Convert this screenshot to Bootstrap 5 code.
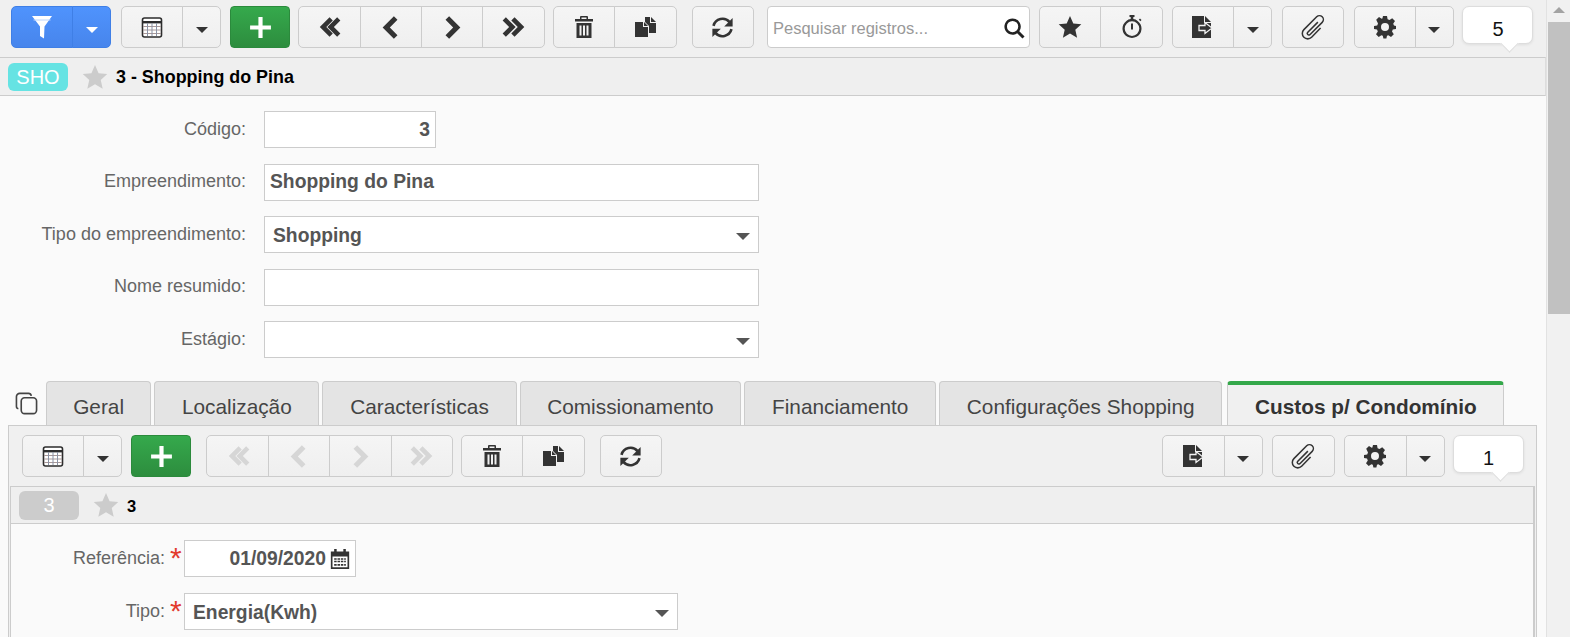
<!DOCTYPE html>
<html lang="pt">
<head>
<meta charset="utf-8">
<title>Shopping do Pina</title>
<link href="https://cdn.jsdelivr.net/npm/bootstrap@5.3.0/dist/css/bootstrap.min.css" rel="stylesheet">
<style>
html,body{height:637px;overflow:hidden}
body{font-family:"Liberation Sans",Arial,sans-serif;background:#fafafa;color:#555}
.page-wrap{height:637px}
.main-col{width:1546px;flex:none;overflow:hidden}
.scroll-col{width:24px;flex:none;background:#f1f1f1;border-left:1px solid #e2e2e2}
.scroll-up{height:22px;padding-top:7px}
.scroll-up i{display:block;width:0;height:0;margin:0 auto;border:6px solid transparent;border-top:0;border-bottom:6px solid #a3a3a3}
.scroll-thumb{height:292px;background:#c1c1c1;margin-left:1px}
.top-bar{height:57px;background:#f0f0f0;padding:6px 0 0 11px}
.sub-bar{height:60px;padding:9px 12px 0 13px}
.btn.tb{height:42px;width:62.4px;padding:0;display:flex;align-items:center;justify-content:center;background:linear-gradient(#f5f5f5,#efefef);border:1px solid #ccc;border-radius:5px;color:#333}
.btn.tb:hover{background:#eee;border-color:#ccc}
.btn.tb-c{width:39px}
.btn.tb-blue{background:linear-gradient(#4f93fd,#4785ec);border-color:#3f7fe6;color:#fff}
.btn.tb-blue:hover{background:#4785ec;border-color:#3f7fe6}
.btn.tb-green{width:60px;background:linear-gradient(#35a94c,#2d8d3e);border-color:#2b8a3c;color:#fff;border-radius:4px}
.btn.tb-green:hover{background:#2d8d3e;border-color:#2b8a3c}
.btn.tb-off{color:#d6d6d6}
.caret-dn{width:0;height:0;border:6px solid transparent;border-bottom:0;border-top:6px solid currentColor;margin-top:6px}
.caret-big{border-width:7px;border-bottom:0;border-top-width:7px;color:#555;margin:3px 3px 0 0}
.ic{display:block;fill:currentColor}
.g05{margin-left:.5px}
.g1{margin-left:1px}
.g15{margin-left:1.5px}
.g7{margin-left:7px}
.g5{margin-left:5px}
.search-box{width:263px;height:42px;background:#fff;border:1px solid #ccc;border-radius:4px;padding:2px 3px 0 5px;font-size:16.5px;color:#999}
.search-box svg{color:#222}
.count-tip{width:71px;height:38px;background:#fff;border:1px solid #ddd;border-radius:7px;text-align:center;font-size:20px;line-height:44px;color:#111;position:relative;box-shadow:0 1px 3px rgba(0,0,0,.08)}
.count-tip::after{content:"";position:absolute;right:16px;bottom:-7px;width:13px;height:13px;background:#fff;transform:rotate(45deg);border:1px solid #ddd;border-width:0 1px 1px 0}
.rec-head{height:39px;background:#efefef;border-top:1px solid #ccc;border-bottom:1px solid #ccc;border-right:1px solid #ddd;padding-left:8px}
.tag-sho{width:60px;height:28px;background:#66e3e3;border-radius:6px;color:#fff;font-size:20px;line-height:28px;text-align:center}
.tag-three{width:60px;height:29px;background:#ccc;border-radius:6px;color:#fff;font-size:20px;line-height:29px;text-align:center}
.star-ic{color:#ccc;margin:0 8px 0 14px}
.rec-title{font-weight:700;font-size:17.9px;color:#000;padding-top:1px}
.rec-title-s{font-weight:700;font-size:16.5px;color:#000;padding-top:3px}
.form-area{padding-top:15px;height:285px}
.frow{height:37px;margin-bottom:15.5px}
.flabel{width:246px;margin-right:18px;text-align:right;font-size:18px;color:#666;padding-bottom:1px}
.fbox.form-control{height:100%;border:1px solid #ccc;border-radius:0;background:#fff;padding:0 5px;font-weight:700;font-size:19.3px;color:#555;line-height:1.2;box-shadow:none}
.w-code{width:172px}
.w-long{width:495px}
.tab-strip{height:44px}
.tab-ic{width:38px;color:#444;padding:11px 0 0 15px}
.nav-tabs.tab-list{border:0;gap:3px;flex-wrap:nowrap;margin-left:8px}
.nav-tabs.tab-list .nav-link{height:44px;margin:0;padding:10px 26.7px 0;background:#e4e4e4;border:1px solid #ccc;border-bottom:0;border-radius:4px 4px 0 0;font-size:20.8px;line-height:30px;color:#444;white-space:nowrap}
.nav-tabs.tab-list .nav-item:first-child .nav-link{padding:10px 26.2px 0}
.nav-tabs.tab-list .nav-link.active{background:#f0f0f0;font-weight:700;color:#333;border-top:4px solid #34a84a;padding:7px 26.7px 0;margin-left:2px}
.sub-panel{margin:0 9px 0 8px;height:230px;background:#f0f0f0;border:1px solid #ccc;border-bottom:0}
.sub-inner{margin:0 1px 0 1px;border-left:1px solid #ccc;border-right:2px solid #ccc;background:#fafafa;height:170px}
.rec-head-s{height:38px;background:#efefef;border-top:1px solid #ccc;border-bottom:1px solid #ccc;padding-left:8px}
.sub-form{padding-top:16px}
.frow-s{height:37px;margin-bottom:16px}
.flabel-s{width:154px;text-align:right;font-size:18px;color:#666;padding-bottom:1px}
.req{width:19px;padding-left:5px;color:#e23b2e;font-size:30px;font-weight:400;line-height:30px;height:30px;margin-top:3px;flex:none}
.w-date{width:172px;justify-content:flex-end;padding-right:5px!important}
.w-date svg{color:#333}
.w-tipo{width:494px}
.sel-text{padding:2px 0 0 3px}
.push-right{margin-left:auto}
</style>
</head>
<body>
<svg width="0" height="0" class="position-absolute">
<defs>
<symbol id="i-funnel" viewBox="0 0 24 24"><path d="M2 1h20l-7.500 10.500L14 23.500l-4-2.500v-9.500z"/><path d="M3.500 5h17" stroke="#bcd4fb" stroke-width="1" fill="none"/></symbol>
<symbol id="i-table" viewBox="0 0 24 24"><rect x="2.500" y="3" width="19" height="19" rx="2" fill="#fff" stroke="#2d2d2d" stroke-width="1.600"/><path d="M2.500 7.200h19" stroke="#2d2d2d" stroke-width="2.400"/><path d="M3 11.500h18M3 15h18M3 18.500h18" stroke="#a99" stroke-width="1"/><path d="M7.500 8v13M12 8v13M16.500 8v13" stroke="#8a93a5" stroke-width="1"/></symbol>
<symbol id="i-plus" viewBox="0 0 24 24"><path d="M10 2h4v8h8v4h-8v8h-4v-8H2v-4h8z"/></symbol>
<symbol id="i-first" viewBox="0 0 24 24"><path d="M12.500 3l3 3-6 6 6 6-3 3-9-9z"/><path d="M20.500 3l3 3-6 6 6 6-3 3-9-9z" transform="translate(-1)"/></symbol>
<symbol id="i-prev" viewBox="0 0 24 24"><path d="M15 2l3.200 3.200L11.400 12l6.800 6.800L15 22 5 12z"/></symbol>
<symbol id="i-next" viewBox="0 0 24 24"><path d="M9 2L5.800 5.200 12.600 12l-6.800 6.800L9 22l10-10z"/></symbol>
<symbol id="i-last" viewBox="0 0 24 24"><path d="M3.500 3l-3 3 6 6-6 6 3 3 9-9z" transform="translate(1)"/><path d="M11.500 3l-3 3 6 6-6 6 3 3 9-9z" transform="translate(1)"/></symbol>
<symbol id="i-trash" viewBox="0 0 24 24"><path d="M9 1h6a1 1 0 0 1 1 1v2h5v2.500H3V4h5V2a1 1 0 0 1 1-1zm.500 1.500V4h5V2.500zM4.500 8h15v15h-15zm3 2.500v10h2v-10zm3.500 0v10h2v-10zm3.500 0v10h2v-10z" fill-rule="evenodd"/></symbol>
<symbol id="i-copy" viewBox="0 0 21 20"><path d="M0 5h8v5h5v10H0z"/><path d="M9 5l4 4h-4z"/><path d="M10 0h5v6h6v10h-7V9l-4-4z"/><path d="M16 0l5 5h-5z"/></symbol>
<symbol id="i-refresh" viewBox="0 0 24 24"><path d="M4 10.500A8.300 8.300 0 0 1 18.300 7.200" fill="none" stroke="currentColor" stroke-width="2.300"/><path d="M21 3.500V11h-7.500z"/><path d="M20 13.500A8.300 8.300 0 0 1 5.700 16.800" fill="none" stroke="currentColor" stroke-width="2.300"/><path d="M3 20.500V13h7.500z"/></symbol>
<symbol id="i-search" viewBox="0 0 24 24"><path d="M10 1.500a8.500 8.500 0 0 1 7 13.300l5.500 5.500-2.200 2.200-5.500-5.500A8.500 8.500 0 1 1 10 1.500zm0 2.600a5.900 5.900 0 1 0 0 11.800 5.900 5.900 0 0 0 0-11.800z" fill-rule="evenodd"/></symbol>
<symbol id="i-star" viewBox="0 0 24 24"><path d="M12 1l3.300 7.600 8 .7-6 5.400 1.800 8.100L12 18.600 4.900 22.800l1.800-8.100-6-5.400 8-.7z"/></symbol>
<symbol id="i-watch" viewBox="0 0 24 24"><path d="M9.500 0h5v2h-1.200v2.100a9.500 9.500 0 1 1-2.600 0V2H9.500zM12 6.300a7.300 7.300 0 1 0 0 14.600 7.300 7.300 0 0 0 0-14.600zM11 8.500h2v6h-2z" fill-rule="evenodd"/><path d="M20 3.500l1.500 1.500-1.200 1.200-1.500-1.500z"/></symbol>
<symbol id="i-export" viewBox="0 0 21 22"><path d="M0 0h12v7h7v15H0z"/><path d="M13 0l6 6h-6z"/><path d="M7 9.500h6V6.500l7 5.500-7 5.500v-3H7z" stroke="#f2f2f2" stroke-width="1.300"/></symbol>
<symbol id="i-clip" viewBox="0 0 24 24"><path d="M16.500 7.500L7 17a1.500 1.500 0 0 0 2.100 2.100L20.500 7.700a3.600 3.600 0 0 0-5.100-5.100L3.600 14.400a5 5 0 0 0 7.100 7.100L19 13" fill="none" stroke="currentColor" stroke-width="1.400"/></symbol>
<symbol id="i-gear" viewBox="0 0 24 24"><path d="M10 1h4l.6 3.200 1.900.8 2.700-1.800 2.800 2.800-1.800 2.700.8 1.900L23 11v3l-3.200.6-.8 1.900 1.800 2.700-2.800 2.800-2.700-1.800-1.300.5-.6 2.800h-3l-.6-2.800-1.400-.5-2.700 1.800L3 19.200l1.800-2.700-.8-1.900L1 14v-3l3.200-.6.800-1.900L3.200 4.800 6 2 8.700 3.800l.7-.3zM12 8a4 4 0 1 0 0 8 4 4 0 0 0 0-8z" fill-rule="evenodd"/></symbol>
<symbol id="i-cal" viewBox="0 0 24 24"><path d="M5 0h3v3h8V0h3v3h4v21H1V3h4zM3 9v13h18V9zm2 2h3v2H5zm4 0h3v2H9zm4 0h3v2h-3zm4 0h2v2h-2zM5 14h3v2H5zm4 0h3v2H9zm4 0h3v2h-3zm4 0h2v2h-2zM5 18h3v2H5zm4 0h3v2H9zm4 0h3v2h-3zm4 0h2v2h-2z" fill-rule="evenodd"/></symbol>
<symbol id="i-tabs" viewBox="0 0 24 24"><rect x="6.500" y="6" width="16" height="16.500" rx="3.500" fill="none" stroke="currentColor" stroke-width="1.700"/><path d="M3.500 17.500A2.500 2.500 0 0 1 1.500 15V5a3.500 3.500 0 0 1 3.500-3.500h9A3 3 0 0 1 17 4" fill="none" stroke="currentColor" stroke-width="1.700"/></symbol>
</defs>
</svg>

<div class="d-flex page-wrap">
<div class="main-col">

  <div class="top-bar d-flex align-items-start gap-2">
    <div class="btn-group">
      <button class="btn tb tb-blue"><svg class="ic" width="24" height="24"><use href="#i-funnel"/></svg></button>
      <button class="btn tb tb-c tb-blue"><span class="caret-dn"></span></button>
    </div>
    <div class="btn-group g15">
      <button class="btn tb"><svg class="ic" width="24" height="24"><use href="#i-table"/></svg></button>
      <button class="btn tb tb-c"><span class="caret-dn"></span></button>
    </div>
    <button class="btn tb tb-green g1"><svg class="ic" width="25" height="25"><use href="#i-plus"/></svg></button>
    <div class="btn-group">
      <button class="btn tb"><svg class="ic" width="26" height="26"><use href="#i-first"/></svg></button>
      <button class="btn tb"><svg class="ic" width="27" height="27"><use href="#i-prev"/></svg></button>
      <button class="btn tb"><svg class="ic" width="27" height="27"><use href="#i-next"/></svg></button>
      <button class="btn tb"><svg class="ic" width="26" height="26"><use href="#i-last"/></svg></button>
    </div>
    <div class="btn-group">
      <button class="btn tb"><svg class="ic" width="24" height="24"><use href="#i-trash"/></svg></button>
      <button class="btn tb"><svg class="ic" width="21" height="20"><use href="#i-copy"/></svg></button>
    </div>
    <button class="btn tb g7"><svg class="ic" width="27" height="27"><use href="#i-refresh"/></svg></button>
    <div class="search-box d-flex align-items-center justify-content-between g5">
      <span>Pesquisar registros...</span>
      <svg class="ic" width="23" height="23"><use href="#i-search"/></svg>
    </div>
    <div class="btn-group g1">
      <button class="btn tb"><svg class="ic" width="24" height="24"><use href="#i-star"/></svg></button>
      <button class="btn tb"><svg class="ic" width="24" height="24"><use href="#i-watch"/></svg></button>
    </div>
    <div class="btn-group g1">
      <button class="btn tb"><svg class="ic" width="21" height="22"><use href="#i-export"/></svg></button>
      <button class="btn tb tb-c"><span class="caret-dn"></span></button>
    </div>
    <button class="btn tb g15"><svg class="ic" width="26" height="26"><use href="#i-clip"/></svg></button>
    <div class="btn-group g15">
      <button class="btn tb"><svg class="ic" width="24" height="24"><use href="#i-gear"/></svg></button>
      <button class="btn tb tb-c"><span class="caret-dn"></span></button>
    </div>
    <div class="count-tip g05">5</div>
  </div>

  <div class="rec-head d-flex align-items-center">
    <span class="tag-sho">SHO</span>
    <svg class="ic star-ic" width="26" height="26"><use href="#i-star"/></svg>
    <span class="rec-title">3 - Shopping do Pina</span>
  </div>

  <div class="form-area">
    <div class="frow d-flex">
      <div class="flabel d-flex align-items-center justify-content-end">Código:</div>
      <div class="fbox form-control w-code d-flex align-items-center justify-content-end">3</div>
    </div>
    <div class="frow d-flex">
      <div class="flabel d-flex align-items-center justify-content-end">Empreendimento:</div>
      <div class="fbox form-control w-long d-flex align-items-center">Shopping do Pina</div>
    </div>
    <div class="frow d-flex">
      <div class="flabel d-flex align-items-center justify-content-end">Tipo do empreendimento:</div>
      <div class="fbox form-control w-long d-flex align-items-center justify-content-between"><span class="sel-text">Shopping</span><span class="caret-dn caret-big"></span></div>
    </div>
    <div class="frow d-flex">
      <div class="flabel d-flex align-items-center justify-content-end">Nome resumido:</div>
      <div class="fbox form-control w-long"></div>
    </div>
    <div class="frow d-flex">
      <div class="flabel d-flex align-items-center justify-content-end">Estágio:</div>
      <div class="fbox form-control w-long d-flex align-items-center justify-content-end"><span class="caret-dn caret-big"></span></div>
    </div>
  </div>

  <div class="tab-strip d-flex">
    <div class="tab-ic"><svg class="ic" width="23" height="23"><use href="#i-tabs"/></svg></div>
    <ul class="nav nav-tabs tab-list">
      <li class="nav-item"><a class="nav-link" href="#">Geral</a></li>
      <li class="nav-item"><a class="nav-link" href="#">Localização</a></li>
      <li class="nav-item"><a class="nav-link" href="#">Características</a></li>
      <li class="nav-item"><a class="nav-link" href="#">Comissionamento</a></li>
      <li class="nav-item"><a class="nav-link" href="#">Financiamento</a></li>
      <li class="nav-item"><a class="nav-link" href="#">Configurações Shopping</a></li>
      <li class="nav-item"><a class="nav-link active" href="#">Custos p/ Condomínio</a></li>
    </ul>
  </div>

  <div class="sub-panel">
    <div class="sub-bar d-flex align-items-start gap-2">
      <div class="btn-group">
        <button class="btn tb"><svg class="ic" width="24" height="24"><use href="#i-table"/></svg></button>
        <button class="btn tb tb-c"><span class="caret-dn"></span></button>
      </div>
      <button class="btn tb tb-green g1"><svg class="ic" width="25" height="25"><use href="#i-plus"/></svg></button>
      <div class="btn-group g7">
        <button class="btn tb tb-off"><svg class="ic" width="26" height="26"><use href="#i-first"/></svg></button>
        <button class="btn tb tb-off"><svg class="ic" width="27" height="27"><use href="#i-prev"/></svg></button>
        <button class="btn tb tb-off"><svg class="ic" width="27" height="27"><use href="#i-next"/></svg></button>
        <button class="btn tb tb-off"><svg class="ic" width="26" height="26"><use href="#i-last"/></svg></button>
      </div>
      <div class="btn-group">
        <button class="btn tb"><svg class="ic" width="24" height="24"><use href="#i-trash"/></svg></button>
        <button class="btn tb"><svg class="ic" width="21" height="20"><use href="#i-copy"/></svg></button>
      </div>
      <button class="btn tb g7"><svg class="ic" width="27" height="27"><use href="#i-refresh"/></svg></button>
      <div class="btn-group push-right">
        <button class="btn tb"><svg class="ic" width="21" height="22"><use href="#i-export"/></svg></button>
        <button class="btn tb tb-c"><span class="caret-dn"></span></button>
      </div>
      <button class="btn tb g15"><svg class="ic" width="26" height="26"><use href="#i-clip"/></svg></button>
      <div class="btn-group g15">
        <button class="btn tb"><svg class="ic" width="24" height="24"><use href="#i-gear"/></svg></button>
        <button class="btn tb tb-c"><span class="caret-dn"></span></button>
      </div>
      <div class="count-tip g05">1</div>
    </div>
    <div class="sub-inner">
      <div class="rec-head-s d-flex align-items-center">
        <span class="tag-three">3</span>
        <svg class="ic star-ic" width="26" height="26"><use href="#i-star"/></svg>
        <span class="rec-title-s">3</span>
      </div>
      <div class="sub-form">
        <div class="frow-s d-flex">
          <div class="flabel-s d-flex align-items-center justify-content-end">Referência:</div>
          <div class="req">*</div>
          <div class="fbox form-control w-date d-flex align-items-center gap-1">01/09/2020<svg class="ic" width="20" height="20"><use href="#i-cal"/></svg></div>
        </div>
        <div class="frow-s d-flex">
          <div class="flabel-s d-flex align-items-center justify-content-end">Tipo:</div>
          <div class="req">*</div>
          <div class="fbox form-control w-tipo d-flex align-items-center justify-content-between"><span class="sel-text">Energia(Kwh)</span><span class="caret-dn caret-big"></span></div>
        </div>
      </div>
    </div>
  </div>

</div>
<div class="scroll-col">
  <div class="scroll-up"><i></i></div>
  <div class="scroll-thumb"></div>
</div>
</div>
</body>
</html>
